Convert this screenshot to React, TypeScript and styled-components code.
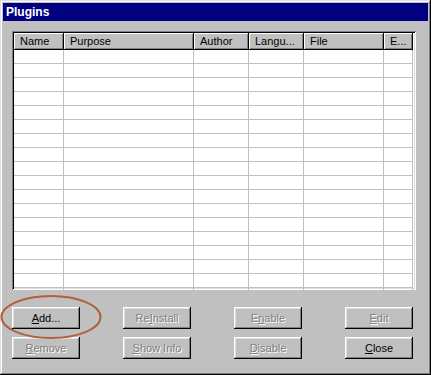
import React from 'react';
import styled, { createGlobalStyle, css } from 'styled-components';

const GlobalStyle = createGlobalStyle`
  html, body {
    margin: 0;
    padding: 0;
    background: #c0c0c0;
  }
  * {
    box-sizing: border-box;
  }
`;

const Window = styled.div`
  position: relative;
  width: 431px;
  height: 375px;
  padding: 3px;
  background: #c0c0c0;
  display: flex;
  flex-direction: column;
  font-family: "Liberation Sans", Arial, sans-serif;
  font-size: 11px;
  color: #000;
  box-shadow: inset -1px -1px #000, inset 1px 1px #dfdfdf, inset -2px -2px #808080,
    inset 2px 2px #fff;
`;

const TitleBar = styled.div`
  height: 18px;
  background: #000080;
  color: #fff;
  font-weight: bold;
  font-size: 12px;
  display: flex;
  align-items: center;
  padding-left: 3px;
`;

const Body = styled.div`
  flex: 1;
  display: flex;
  flex-direction: column;
  padding: 10px 12px 13px 9px;
`;

const ListFrame = styled.div`
  height: 259px;
  padding: 2px;
  background: #fff;
  overflow: hidden;
  box-shadow: inset 1px 1px #808080, inset -1px -1px #fff, inset 2px 2px #000,
    inset -2px -2px #dfdfdf;
`;

const HeaderRow = styled.div`
  display: flex;
  height: 17px;
`;

const HeaderCell = styled.div<{ $w: number }>`
  width: ${(p) => p.$w}px;
  flex: none;
  background: #c0c0c0;
  padding: 1px 0 0 6px;
  line-height: 15px;
  white-space: nowrap;
  overflow: hidden;
  box-shadow: inset -1px -1px #000, inset 1px 1px #fff, inset -2px -2px #808080;
`;

const Row = styled.div`
  display: flex;
  height: 14px;
`;

const Cell = styled.div<{ $w: number }>`
  width: ${(p) => p.$w}px;
  flex: none;
  border-right: 1px solid #c0c0c0;
  border-bottom: 1px solid #c0c0c0;
`;

const ButtonGrid = styled.div`
  margin-top: 17px;
  display: grid;
  grid-template-columns: repeat(4, 68px);
  grid-auto-rows: 22px;
  justify-content: space-between;
  row-gap: 8px;
  padding-right: 3px;
`;

const Button = styled.div<{ $disabled?: boolean }>`
  display: flex;
  align-items: center;
  justify-content: center;
  background: #c0c0c0;
  padding-bottom: 1px;
  box-shadow: inset -1px -1px #000, inset 1px 1px #fff, inset -2px -2px #808080,
    inset 2px 2px #dfdfdf;
  ${(p) =>
    p.$disabled &&
    css`
      color: #808080;
      text-shadow: 1px 1px 0 #fff;
    `}
`;

const Key = styled.span`
  text-decoration: underline;
`;

const Highlight = styled.svg`
  position: absolute;
  left: 0;
  top: 294px;
`;

const columns = [
  { label: 'Name', w: 50 },
  { label: 'Purpose', w: 130 },
  { label: 'Author', w: 55 },
  { label: 'Langu...', w: 55 },
  { label: 'File', w: 80 },
  { label: 'E...', w: 29 },
];

const buttons = [
  { pre: '', key: 'A', post: 'dd...', disabled: false },
  { pre: 'Re', key: 'I', post: 'nstall', disabled: true },
  { pre: 'E', key: 'n', post: 'able', disabled: true },
  { pre: '', key: 'E', post: 'dit', disabled: true },
  { pre: '', key: 'R', post: 'emove', disabled: true },
  { pre: '', key: 'S', post: 'how Info', disabled: true },
  { pre: '', key: 'D', post: 'isable', disabled: true },
  { pre: '', key: 'C', post: 'lose', disabled: false },
];

export default function App() {
  const rows = Array.from({ length: 18 }, (_, i) => i);
  return (
    <Window>
      <GlobalStyle />
      <TitleBar>Plugins</TitleBar>
      <Body>
        <ListFrame>
          <HeaderRow>
            {columns.map((c) => (
              <HeaderCell key={c.label} $w={c.w}>
                {c.label}
              </HeaderCell>
            ))}
          </HeaderRow>
          {rows.map((r) => (
            <Row key={r}>
              {columns.map((c) => (
                <Cell key={c.label} $w={c.w} />
              ))}
            </Row>
          ))}
        </ListFrame>
        <ButtonGrid>
          {buttons.map((b) => (
            <Button key={b.pre + b.key + b.post} $disabled={b.disabled}>
              <span>
                {b.pre}
                <Key>{b.key}</Key>
                {b.post}
              </span>
            </Button>
          ))}
        </ButtonGrid>
      </Body>
      <Highlight width="104" height="46" viewBox="0 0 104 46">
        <ellipse cx="51" cy="23" rx="49.5" ry="21" fill="none" stroke="#b0603a" strokeWidth="2" />
      </Highlight>
    </Window>
  );
}
